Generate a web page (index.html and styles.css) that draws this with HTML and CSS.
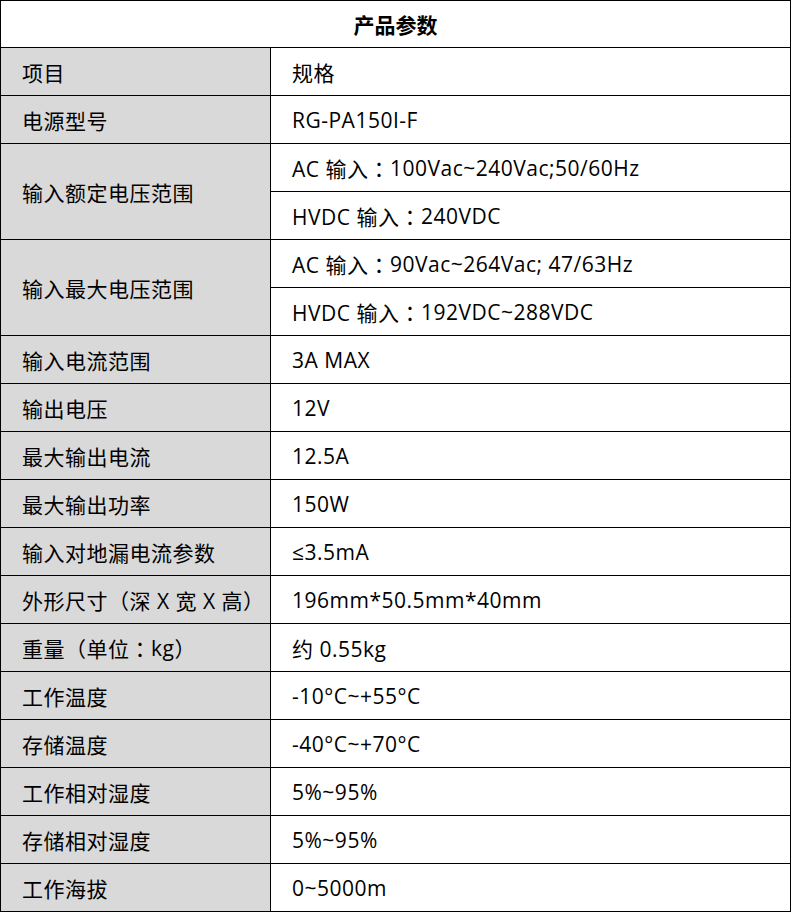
FILE: index.html
```html
<!DOCTYPE html>
<html lang="zh-CN">
<head>
<meta charset="utf-8">
<title>产品参数</title>
<link rel="stylesheet" href="styles.css">
</head>
<body>
<div class="spec">
  <div class="cell head">产品参数</div>

  <div class="cell key">项目</div><div class="cell val">规格</div>
  <div class="cell key">电源型号</div><div class="cell val">RG-PA150I-F</div>
  <div class="cell key span2">输入额定电压范围</div><div class="cell val">AC 输入<span class="p">：</span>100Vac~240Vac;50/60Hz</div>
  <div class="cell val">HVDC 输入<span class="p">：</span>240VDC</div>
  <div class="cell key span2">输入最大电压范围</div><div class="cell val">AC 输入<span class="p">：</span>90Vac~264Vac; 47/63Hz</div>
  <div class="cell val">HVDC 输入<span class="p">：</span>192VDC~288VDC</div>
  <div class="cell key">输入电流范围</div><div class="cell val">3A MAX</div>
  <div class="cell key">输出电压</div><div class="cell val">12V</div>
  <div class="cell key">最大输出电流</div><div class="cell val">12.5A</div>
  <div class="cell key">最大输出功率</div><div class="cell val">150W</div>
  <div class="cell key">输入对地漏电流参数</div><div class="cell val">≤3.5mA</div>
  <div class="cell key">外形尺寸<span class="p">（</span>深 X 宽 X 高<span class="p">）</span></div><div class="cell val">196mm*50.5mm*40mm</div>
  <div class="cell key">重量<span class="p">（</span>单位<span class="p">：</span>kg<span class="p">）</span></div><div class="cell val">约 0.55kg</div>
  <div class="cell key">工作温度</div><div class="cell val">-10°C~+55°C</div>
  <div class="cell key">存储温度</div><div class="cell val">-40°C~+70°C</div>
  <div class="cell key">工作相对湿度</div><div class="cell val">5%~95%</div>
  <div class="cell key">存储相对湿度</div><div class="cell val">5%~95%</div>
  <div class="cell key">工作海拔</div><div class="cell val">0~5000m</div>
</div>
</body>
</html>
```

FILE: styles.css
```css
html, body {
  margin: 0;
  padding: 0;
  background: #fff;
}

.spec {
  display: grid;
  grid-template-columns: 270px 520px;
  grid-template-rows: 47px repeat(18, 48px);
  width: 791px;
  box-sizing: border-box;
  border-top: 1px solid #000;
  border-left: 1px solid #000;
  font-family: "Open Sans", "Liberation Sans", "Noto Sans CJK SC", sans-serif;
  font-size: 21px;
  letter-spacing: 0.5px;
  color: #000;
}

.cell {
  box-sizing: border-box;
  border-right: 1px solid #000;
  border-bottom: 1px solid #000;
  display: flex;
  align-items: center;
  padding-left: 21px;
  white-space: pre;
}

.head {
  grid-column: 1 / 3;
  justify-content: center;
  padding-left: 0;
  font-weight: bold;
  letter-spacing: 0;
}

.key {
  background: #d9d9d9;
}

.span2 {
  grid-row: span 2;
}

.val {
  background: #fff;
}

.p {
  font-family: "Noto Sans CJK TC", sans-serif;
}
```
